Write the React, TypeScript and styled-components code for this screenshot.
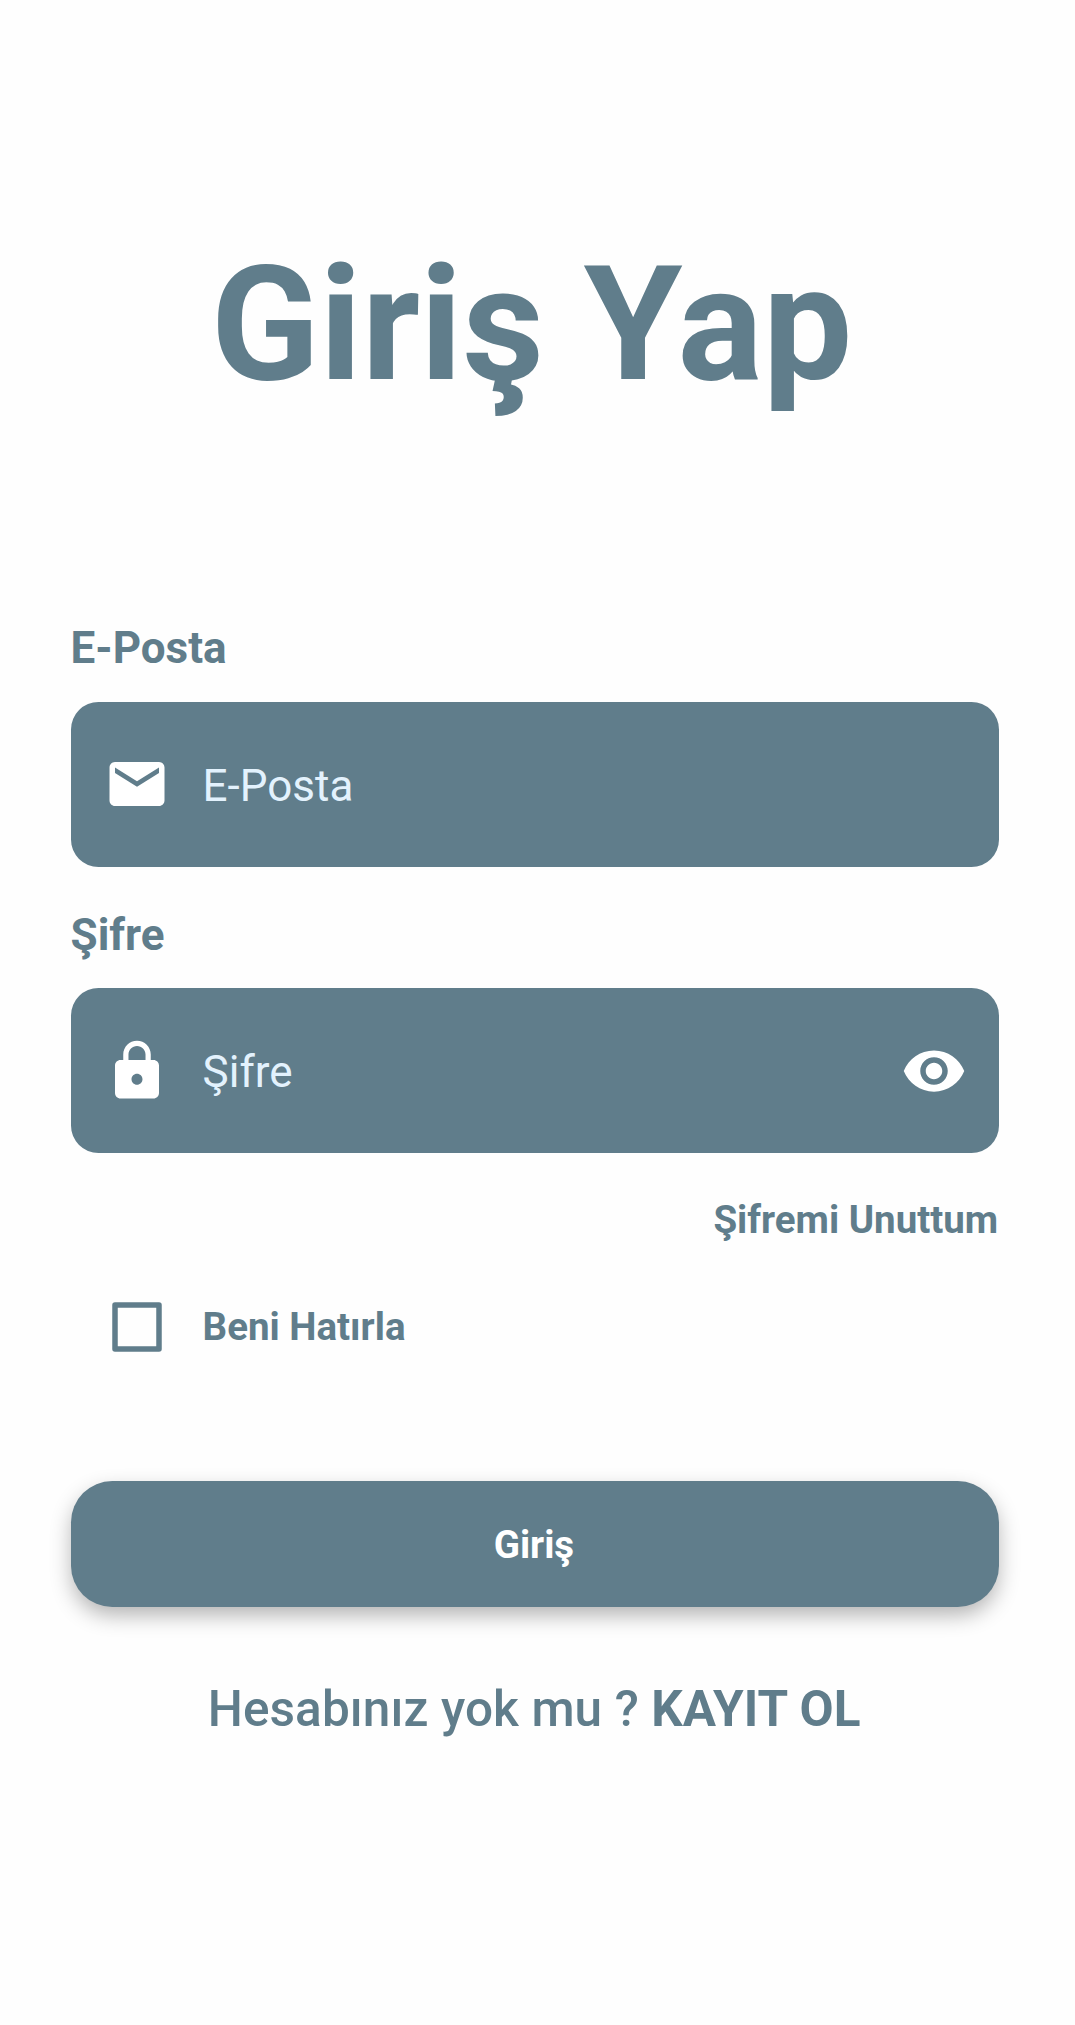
import React from "react";
import styled, { createGlobalStyle } from "styled-components";

const Global = createGlobalStyle`
  * { box-sizing: border-box; }
  body { margin: 0; background: #fefefe; font-family: Roboto, "Noto Sans", sans-serif; color: #607d8b; }
`;
const Screen = styled.main`
  display: flex;
  flex-direction: column;
  min-height: 2025px;
  padding: 230.5px 75.8px 0 70.6px;
`;
const Title = styled.h1`
  margin: 0;
  padding-right: 6.5px;
  text-align: center;
  font-size: 159.5px;
  line-height: 188px;
  font-weight: 700;
  white-space: nowrap;
`;
const Form = styled.div`
  display: flex;
  flex-direction: column;
  margin-top: 199.5px;
`;
const Label = styled.label`
  font-size: 44px;
  line-height: 60px;
  font-weight: 700;
`;
const Field = styled.div`
  display: flex;
  align-items: center;
  height: 165px;
  margin: 23.5px 0 38.2px;
  padding: 0 32.6px 0 33px;
  border-radius: 27.5px;
  background: #607d8b;
  color: #fff;
`;
const Hint = styled.span`
  flex: 1;
  margin-left: 33px;
  padding-top: 3px;
  font-size: 44px;
  color: #e3f2fd;
`;
const Icon = styled.svg`
  flex: none;
  width: 66px;
  height: 66px;
  fill: currentColor;
`;
const Forgot = styled.a`
  align-self: flex-end;
  margin: 4px 1px 0 0;
  font-size: 38.5px;
  line-height: 50px;
  font-weight: 700;
`;
const Remember = styled.div`
  display: flex;
  align-items: center;
  gap: 33px;
  height: 66px;
  margin: 48.2px 0 0 33px;
  font-size: 38.5px;
  font-weight: 700;
`;
const Submit = styled.button`
  height: 126.5px;
  margin-top: 121.1px;
  padding: 1.5px 2px 0 0;
  border: 0;
  border-radius: 41.25px;
  background: #607d8b;
  color: #fff;
  font: 700 38.5px Roboto, sans-serif;
  box-shadow: 0 9px 21px -1px rgba(0, 0, 0, 0.3);
`;
const SignUp = styled.p`
  margin: 68.6px 0 0;
  padding-right: 1.5px;
  text-align: center;
  font-size: 49.5px;
  line-height: 66px;
  font-weight: 500;
  letter-spacing: 0.1px;
  white-space: nowrap;
  b { font-weight: 700; }
`;

export default function App() {
  return (
    <Screen>
      <Global />
      <Title>Giriş Yap</Title>
      <Form>
        <Label>E-Posta</Label>
        <Field>
          <Icon viewBox="0 0 24 24"><path d="M20 4H4c-1.1 0-1.99.9-1.99 2L2 18c0 1.1.9 2 2 2h16c1.1 0 2-.9 2-2V6c0-1.1-.9-2-2-2zm0 4l-8 5-8-5V6l8 5 8-5v2z" /></Icon>
          <Hint>E-Posta</Hint>
        </Field>
        <Label>Şifre</Label>
        <Field>
          <Icon viewBox="0 0 24 24"><path d="M18 8h-1V6c0-2.76-2.24-5-5-5S7 3.24 7 6v2H6c-1.1 0-2 .9-2 2v10c0 1.1.9 2 2 2h12c1.1 0 2-.9 2-2V10c0-1.1-.9-2-2-2zm-6 9c-1.1 0-2-.9-2-2s.9-2 2-2 2 .9 2 2-.9 2-2 2zm3.1-9H8.9V6c0-1.71 1.39-3.1 3.1-3.1 1.71 0 3.1 1.39 3.1 3.1v2z" /></Icon>
          <Hint>Şifre</Hint>
          <Icon viewBox="0 0 24 24"><path d="M12 4.5C7 4.5 2.73 7.61 1 12c1.73 4.39 6 7.5 11 7.5s9.27-3.11 11-7.5c-1.73-4.39-6-7.5-11-7.5zM12 17c-2.76 0-5-2.24-5-5s2.24-5 5-5 5 2.24 5 5-2.24 5-5 5zm0-8c-1.66 0-3 1.34-3 3s1.34 3 3 3 3-1.34 3-3-1.34-3-3-3z" /></Icon>
        </Field>
        <Forgot>Şifremi Unuttum</Forgot>
        <Remember>
          <Icon viewBox="0 0 24 24"><path fillRule="evenodd" d="M4 3h16a1 1 0 0 1 1 1v16a1 1 0 0 1-1 1H4a1 1 0 0 1-1-1V4a1 1 0 0 1 1-1zM5 5v14h14V5z" /></Icon>
          <span>Beni Hatırla</span>
        </Remember>
        <Submit>Giriş</Submit>
        <SignUp>Hesabınız yok mu ? <b>KAYIT OL</b></SignUp>
      </Form>
    </Screen>
  );
}
